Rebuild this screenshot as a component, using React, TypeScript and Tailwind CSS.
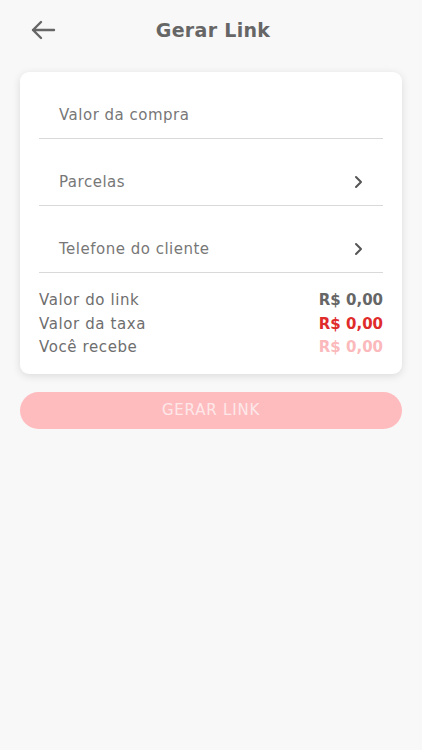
import React from "react";

const font = { fontFamily: '"DejaVu Sans", "Noto Sans", sans-serif' };

function Chevron() {
  return (
    <svg width="12" height="14" viewBox="0 0 12 14" fill="none">
      <path d="M3 2l5 5-5 5" stroke="#555" strokeWidth="2" strokeLinecap="round" strokeLinejoin="round" />
    </svg>
  );
}

function Field({ label, chevron }: { label: string; chevron?: boolean }) {
  return (
    <div className="flex h-[67px] items-end justify-between border-b border-[#d9d9d9] pb-[13px] pl-[20px] pr-[18px]">
      <span className="text-[15px] leading-[20px] tracking-[0.5px] text-[#777]">{label}</span>
      {chevron && (
        <span className="flex h-[20px] items-center">
          <Chevron />
        </span>
      )}
    </div>
  );
}

export default function App() {
  return (
    <div className="min-h-[750px] w-full bg-[#f8f8f8]" style={font}>
      <div className="relative flex h-[60px] items-center justify-center">
        <button className="absolute left-[30px] top-[19px]">
          <svg width="26" height="22" viewBox="0 0 26 22" fill="none">
            <path d="M24 11H3M11 3l-8 8 8 8" stroke="#666" strokeWidth="2.4" strokeLinecap="round" strokeLinejoin="round" />
          </svg>
        </button>
        <h1 className="pl-[4px] text-[19px] font-bold tracking-[0.3px] text-[#666]">Gerar Link</h1>
      </div>
      <div className="mx-[20px] mt-[12px] rounded-[9px] bg-white px-[19px] pb-[14px] shadow-[0_2px_8px_rgba(0,0,0,0.12)]">
        <Field label="Valor da compra" />
        <Field label="Parcelas" chevron />
        <Field label="Telefone do cliente" chevron />
        <div className="mt-[16px] flex flex-col text-[15px] leading-[23.5px] tracking-[0.6px]">
          <div className="flex justify-between">
            <span className="text-[#6e6e6e]">Valor do link</span>
            <span className="font-bold tracking-[0px] text-[#666]">R$ 0,00</span>
          </div>
          <div className="flex justify-between">
            <span className="text-[#6e6e6e]">Valor da taxa</span>
            <span className="font-bold tracking-[0px] text-[#e02b2b]">R$ 0,00</span>
          </div>
          <div className="flex justify-between">
            <span className="text-[#6e6e6e]">Você recebe</span>
            <span className="font-bold tracking-[0px] text-[#fbb9bc]">R$ 0,00</span>
          </div>
        </div>
      </div>
      <button className="mx-[20px] mt-[18px] flex h-[37px] w-[382px] items-center justify-center rounded-full bg-[#ffbcbf] text-[15px] tracking-[0.8px] text-[#fde8e9]">
        GERAR LINK
      </button>
    </div>
  );
}
